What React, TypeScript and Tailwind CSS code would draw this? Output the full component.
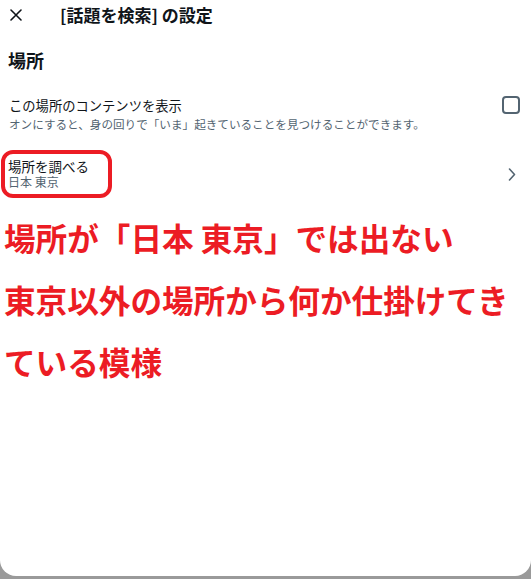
import React from "react";

const jp = "font-['Noto_Sans_CJK_JP','Noto_Sans',sans-serif]";

export default function App() {
  return (
    <div className={`w-[531px] h-[579px] bg-[#9a9a9a] ${jp}`}>
      <div className="h-[576px] bg-white rounded-b-2xl text-[#0f1419] overflow-hidden">
        {/* header */}
        <div className="h-[30px] flex items-center pl-[10px]">
          <svg width="12" height="12" viewBox="0 0 12 12" className="shrink-0">
            <path d="M1 1 L11 11 M11 1 L1 11" stroke="#0f1419" strokeWidth="1.6" strokeLinecap="round" />
          </svg>
          <div className="ml-[38px] text-[17px] font-bold leading-[20px]">[話題を検索] の設定</div>
        </div>

        {/* section heading */}
        <div className="mt-[18px] pl-[8px] text-[18px] font-bold leading-[24px]">場所</div>

        {/* show content row */}
        <div className="mt-[24px] flex justify-between pl-[9px] pr-[11px]">
          <div>
            <div className="text-[13.3px] leading-[20px]">この場所のコンテンツを表示</div>
            <div className="text-[11.6px] leading-[16px] text-[#536471]">
              オンにすると、身の回りで「いま」起きていることを見つけることができます。
            </div>
          </div>
          <div className="w-[18px] h-[18px] border-2 border-[#536471] rounded-[4px]" />
        </div>

        {/* location row */}
        <div className="mt-[18px] flex items-center justify-between pl-[1px] pr-[15px]">
          <div className="w-[111px] h-[48px] border-4 border-[#ec1c24] rounded-[12px] pl-[3px] pt-[4px]">
            <div className="text-[13.5px] leading-[17px]">場所を調べる</div>
            <div className="text-[12px] leading-[14px] text-[#536471]">日本 東京</div>
          </div>
          <svg width="8" height="13" viewBox="0 0 8 13">
            <path d="M1.5 1 L6.5 6.5 L1.5 12" stroke="#536471" strokeWidth="1.6" fill="none" strokeLinecap="round" strokeLinejoin="round" />
          </svg>
        </div>

        {/* red annotation */}
        <div className="mt-[8px] pl-[4px] text-[31.6px] font-bold leading-[62px] text-[#ec1c24] whitespace-nowrap">
          場所が「日本 東京」では出ない
          <br />
          東京以外の場所から何か仕掛けてき
          <br />
          ている模様
        </div>
      </div>
    </div>
  );
}
